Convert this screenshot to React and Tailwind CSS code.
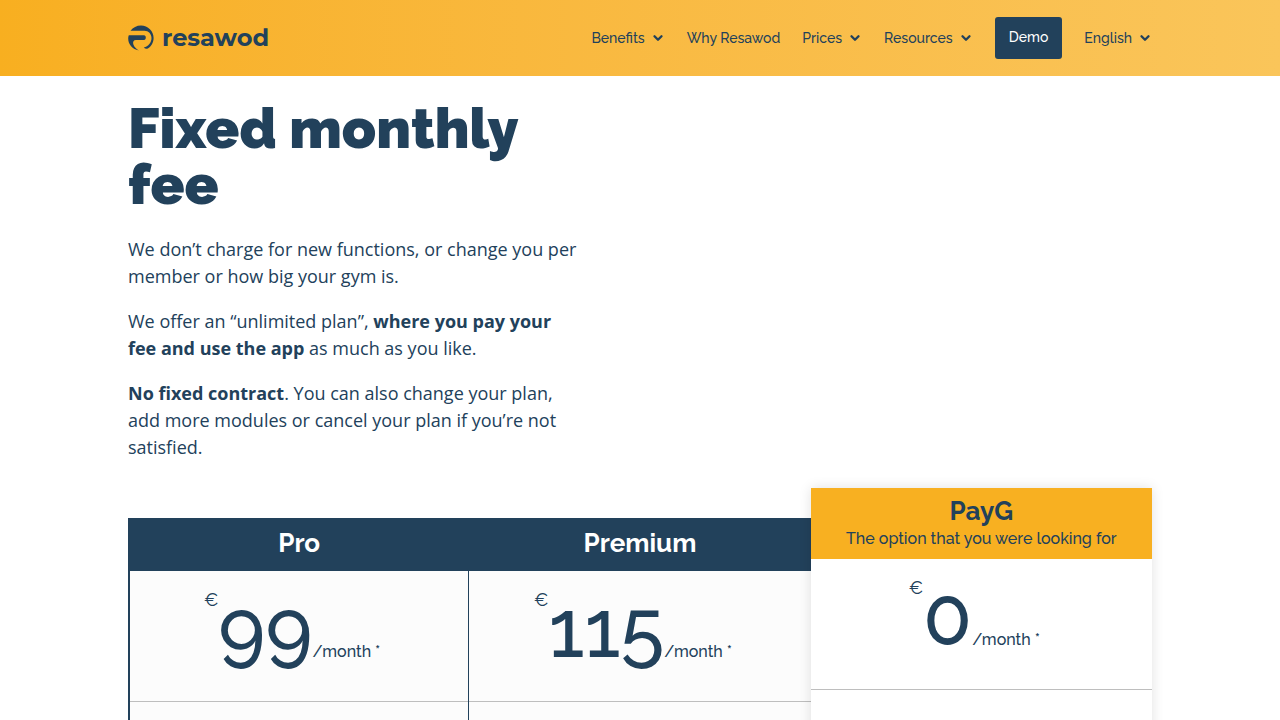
import { ChevronDown } from "lucide-react";

const menu = [
  { name: "Benefits", path: "#benefits", sub: true },
  { name: "Why Resawod", path: "#why" },
  { name: "Prices", path: "#prices", sub: true },
  { name: "Resources", path: "#resources", sub: true },
  { name: "Demo", path: "#demo", button: true },
  { name: "English", path: "#english", sub: true },
];

const plans = [
  { name: "Pro", price: "99", style: "mt-[30px] border-l-2 border-r border-[#22415b] bg-[#fcfcfc]" },
  { name: "Premium", price: "115", style: "mt-[30px] bg-[#fcfcfc]" },
  { name: "PayG", price: "0", note: "The option that you were looking for", style: "relative bg-white shadow-[0_0_12px_rgba(0,0,0,0.12)]" },
];

function Logo() {
  return (
    <a href="#home" className="flex items-center gap-2">
      <svg width="26" height="26" viewBox="0 0 26 26" fill="none" aria-hidden="true">
        <path d="M2.500 5.800C5 2.400 8.700 .4 13 .4C20 .4 25.600 6 25.600 13C25.600 17.500 23.200 21.600 19.800 23.500C18.500 24.100 17 23.800 15.800 22.600C20.400 21.500 23.500 17.500 23.500 13C23.500 9 20.500 5.800 16.500 5.800Z" fill="#22415b" />
        <path d="M.8 10.300H16C17.200 10.300 17.800 11.200 17.800 12.600C17.800 14 17.200 15 16 15H8C5.600 15 4.600 17 5.300 19.300C6.200 22 8.300 24 10.800 25.400C4.500 24.400 .2 19.400 .2 13.500C.2 12.400 .4 11.300 .8 10.300Z" fill="#22415b" />
      </svg>
      <span className="font-['Montserrat','Inter',sans-serif] text-[24px] leading-8 font-bold">resawod</span>
    </a>
  );
}

function Plan({ plan }) {
  const { name, price, note, style } = plan;
  return (
    <section className={`flex flex-col text-center ${style}`}>
      <header className={note ? "h-[71px] bg-[#f8b021] pt-[7px]" : "h-[53px] bg-[#22415b] pt-[9px] text-white"}>
        <h2 className="text-[26px] leading-8 font-bold">{name}</h2>
        {note && <p className="text-base leading-6 font-medium">{note}</p>}
      </header>
      <div className="flex h-[131px] items-baseline justify-center border-b border-[#bebebe] pt-[18px] pr-3.5 font-medium">
        <span className="self-start text-lg leading-[22px] font-normal">€</span>
        <span className="text-[80px] leading-[80px]">{price}</span>
        <span className="text-base">/month *</span>
      </div>
      <div className="h-24" />
    </section>
  );
}

export default function App() {
  return (
    <div className="min-h-screen bg-white font-['Raleway','Lato',sans-serif] text-[#22415b]">
      <header className="bg-linear-to-r from-[#f8af20] to-[#fac55a]">
        <div className="mx-auto flex h-[76px] w-4/5 items-center justify-between">
          <Logo />
          <nav className="flex items-center gap-[22px] text-sm font-medium">
            {menu.map((item) => (
              <a key={item.name} href={item.path} className={item.button ? "rounded-[3px] bg-[#22415b] px-3.5 pt-2.5 pb-3 text-white" : "flex items-center gap-1.5"}>
                {item.name}
                {item.sub && <ChevronDown size={14} strokeWidth={4} />}
              </a>
            ))}
          </nav>
        </div>
      </header>

      <main className="mx-auto w-4/5">
        <div className="w-[44%] pt-6">
          <h1 className="pb-6 text-[56px] leading-[56px] font-black">Fixed monthly fee</h1>
          <div className="space-y-[18px] font-['Open_Sans',sans-serif] text-lg leading-[27px]">
            <p>We don’t charge for new functions, or change you per member or how big your gym is.</p>
            <p>We offer an “unlimited plan”, <strong>where you pay your fee and use the app</strong> as much as you like.</p>
            <p><strong>No fixed contract</strong>. You can also change your plan, add more modules or cancel your plan if you’re not satisfied.</p>
          </div>
        </div>

        <div className="mt-[27px] grid grid-cols-3">
          {plans.map((plan) => <Plan key={plan.name} plan={plan} />)}
        </div>
      </main>
    </div>
  );
}
